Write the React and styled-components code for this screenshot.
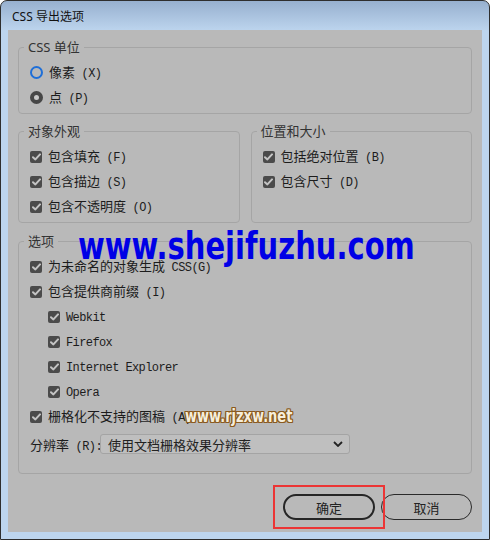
import styled, { createGlobalStyle } from "styled-components";

const GlobalStyle = createGlobalStyle`
  html, body {
    margin: 0;
    padding: 0;
    background: #ffffff;
  }
  * {
    box-sizing: border-box;
  }
`;

const CJK = /([\u3000-\u9fff\uff00-\uffef]+)/;

// chinese runs in a sans face, the rest in the dialog's narrow mono face
const Mixed = ({ text }) =>
  text
    .split(CJK)
    .filter((part) => part !== "")
    .map((part, i) =>
      CJK.test(part) ? <Cn key={i}>{part}</Cn> : <Mono key={i}>{part}</Mono>,
    );

const CheckIcon = () => (
  <CheckBox>
    <svg width="9" height="8" viewBox="0 0 9 8">
      <path
        d="M1 4.2 L3.4 6.4 L8 1.4"
        fill="none"
        stroke="#c4c4c4"
        strokeWidth="2"
        strokeLinecap="round"
        strokeLinejoin="round"
      />
    </svg>
  </CheckBox>
);

const Check = ({ label, nested }) => (
  <Row $nested={nested}>
    <CheckIcon />
    <Label>
      <Mixed text={label} />
    </Label>
  </Row>
);

const Radio = ({ label, checked }) => (
  <Row>
    <RadioDot $checked={checked} />
    <Label>
      <Mixed text={label} />
    </Label>
  </Row>
);

const App = () => {
  return (
    <>
      <GlobalStyle />
      <Window>
        <TitleBar>CSS 导出选项</TitleBar>
        <Body>
          <Group>
            <Legend>CSS 单位</Legend>
            <Radio label="像素 (X)" />
            <Radio label="点 (P)" checked />
          </Group>

          <Columns>
            <Group>
              <Legend>对象外观</Legend>
              <Check label="包含填充 (F)" />
              <Check label="包含描边 (S)" />
              <Check label="包含不透明度 (O)" />
            </Group>
            <Group>
              <Legend>位置和大小</Legend>
              <Check label="包括绝对位置 (B)" />
              <Check label="包含尺寸 (D)" />
            </Group>
          </Columns>

          <Group $last>
            <Legend>选项</Legend>
            <Check label="为未命名的对象生成 CSS(G)" />
            <Check label="包含提供商前缀 (I)" />
            <Check label="Webkit" nested />
            <Check label="Firefox" nested />
            <Check label="Internet Explorer" nested />
            <Check label="Opera" nested />
            <Check label="栅格化不支持的图稿 (A)" />
            <SelectRow>
              <SelectLabel>
                <Mixed text="分辨率 (R):" />
              </SelectLabel>
              <Select>
                <Cn>使用文档栅格效果分辨率</Cn>
                <svg width="10" height="6" viewBox="0 0 10 6">
                  <path
                    d="M1 1 L5 5 L9 1"
                    fill="none"
                    stroke="#222"
                    strokeWidth="1.8"
                  />
                </svg>
              </Select>
            </SelectRow>
            <WatermarkBig>www.shejifuzhu.com</WatermarkBig>
            <WatermarkSmall>www.rjzxw.net</WatermarkSmall>
          </Group>

          <ButtonBar>
            <Highlight>
              <Button $primary>确定</Button>
            </Highlight>
            <Button>取消</Button>
          </ButtonBar>
        </Body>
      </Window>
    </>
  );
};

export default App;

const Window = styled.div`
  width: 490px;
  height: 540px;
  border: 1px solid #2e2e2e;
  border-radius: 7px 7px 0 0;
  background: linear-gradient(#97b0cf 0px, #bdd5ee 30px, #bdd5ee 100%);
  padding: 0 7px 7px 7px;
  display: flex;
  flex-direction: column;
  overflow: hidden;
`;

const TitleBar = styled.div`
  height: 29px;
  display: flex;
  align-items: center;
  padding-left: 4px;
  font-family: "Noto Sans", "Noto Sans CJK SC", sans-serif;
  font-size: 12px;
  color: #111;
`;

const Body = styled.div`
  flex: 1;
  background: #b9b9b9;
  padding: 9px 10px 0 10px;
  display: flex;
  flex-direction: column;
`;

const Group = styled.fieldset`
  position: relative;
  margin: 0 0 ${(p) => (p.$last ? "0" : "9px")} 0;
  padding: 5px 10px ${(p) => (p.$last ? "19px" : "3px")} 11px;
  border: 1px solid #a5a5a5;
  border-radius: 4px;
  min-width: 0;
`;

const Legend = styled.legend`
  padding: 0 4px;
  margin-left: -6px;
  line-height: 16px;
  font-family: "Noto Sans", "Noto Sans CJK SC", sans-serif;
  font-size: 13px;
  color: #333;
`;

const Columns = styled.div`
  display: grid;
  grid-template-columns: 1fr 1fr;
  gap: 11px;
  margin-bottom: 1px;
`;

const Row = styled.div`
  height: 25px;
  display: flex;
  align-items: center;
  gap: 6px;
  padding-left: ${(p) => (p.$nested ? "18px" : "0")};
`;

const Label = styled.span`
  color: #1c1c1c;
  white-space: nowrap;
  line-height: 16px;
`;

const Cn = styled.span`
  font-family: "Noto Sans CJK SC", sans-serif;
  font-size: 13px;
`;

const Mono = styled.span`
  font-family: "Liberation Mono", "Courier New", monospace;
  font-size: 12px;
  letter-spacing: -0.6px;
  white-space: pre;
`;

const CheckBox = styled.span`
  width: 12px;
  height: 12px;
  flex: none;
  border-radius: 2px;
  background: #4b4b4b;
  display: flex;
  align-items: center;
  justify-content: center;
`;

const RadioDot = styled.span`
  width: 13px;
  height: 13px;
  flex: none;
  border-radius: 50%;
  border: ${(p) => (p.$checked ? "4px solid #474747" : "2px solid #1f6fd8")};
  background: ${(p) => (p.$checked ? "#c9c9c9" : "transparent")};
`;

const SelectRow = styled.div`
  display: flex;
  align-items: center;
  margin-top: 5px;
  height: 20px;
`;

const SelectLabel = styled.span`
  width: 70px;
  flex: none;
  color: #1c1c1c;
  white-space: nowrap;
`;

const Select = styled.div`
  width: 250px;
  height: 20px;
  display: flex;
  align-items: center;
  justify-content: space-between;
  padding: 0 6px 0 7px;
  background: #bfbfbf;
  border: 1px solid #a4a4a4;
  border-radius: 3px;
  color: #222;
`;

const WatermarkBig = styled.div`
  position: absolute;
  left: 59px;
  top: -14px;
  font-family: "DejaVu Sans", sans-serif;
  font-weight: bold;
  font-size: 29px;
  line-height: 30px;
  color: #0000e6;
  transform: scaleY(1.27);
  transform-origin: left bottom;
  white-space: nowrap;
  pointer-events: none;
`;

const WatermarkSmall = styled.div`
  position: absolute;
  left: 166px;
  top: 163px;
  font-family: "DejaVu Sans", sans-serif;
  font-weight: bold;
  font-size: 13px;
  line-height: 14px;
  color: #f6eedc;
  text-shadow:
    1px 0 0 #8a5a1e, -1px 0 0 #8a5a1e, 0 1px 0 #8a5a1e, 0 -1px 0 #8a5a1e,
    1px 1px 0 #8a5a1e, -1px -1px 0 #8a5a1e, 1px -1px 0 #8a5a1e, -1px 1px 0 #8a5a1e;
  transform: scaleY(1.3);
  transform-origin: left bottom;
  white-space: nowrap;
  pointer-events: none;
`;

const ButtonBar = styled.div`
  display: flex;
  justify-content: flex-end;
  gap: 6px;
  margin-top: 20px;
`;

const Highlight = styled.span`
  position: relative;
  display: flex;

  &::after {
    content: "";
    position: absolute;
    inset: -9px -10px;
    border: 2px solid #ec3535;
    pointer-events: none;
  }
`;

const Button = styled.button`
  width: ${(p) => (p.$primary ? "92px" : "91px")};
  height: 26px;
  padding: 0;
  border-radius: 13px;
  border: ${(p) => (p.$primary ? "2px solid #262626" : "1px solid #2a2a2a")};
  background: #b9b9b9;
  font-family: "Noto Sans CJK SC", sans-serif;
  font-size: 13px;
  color: #222;
`;
